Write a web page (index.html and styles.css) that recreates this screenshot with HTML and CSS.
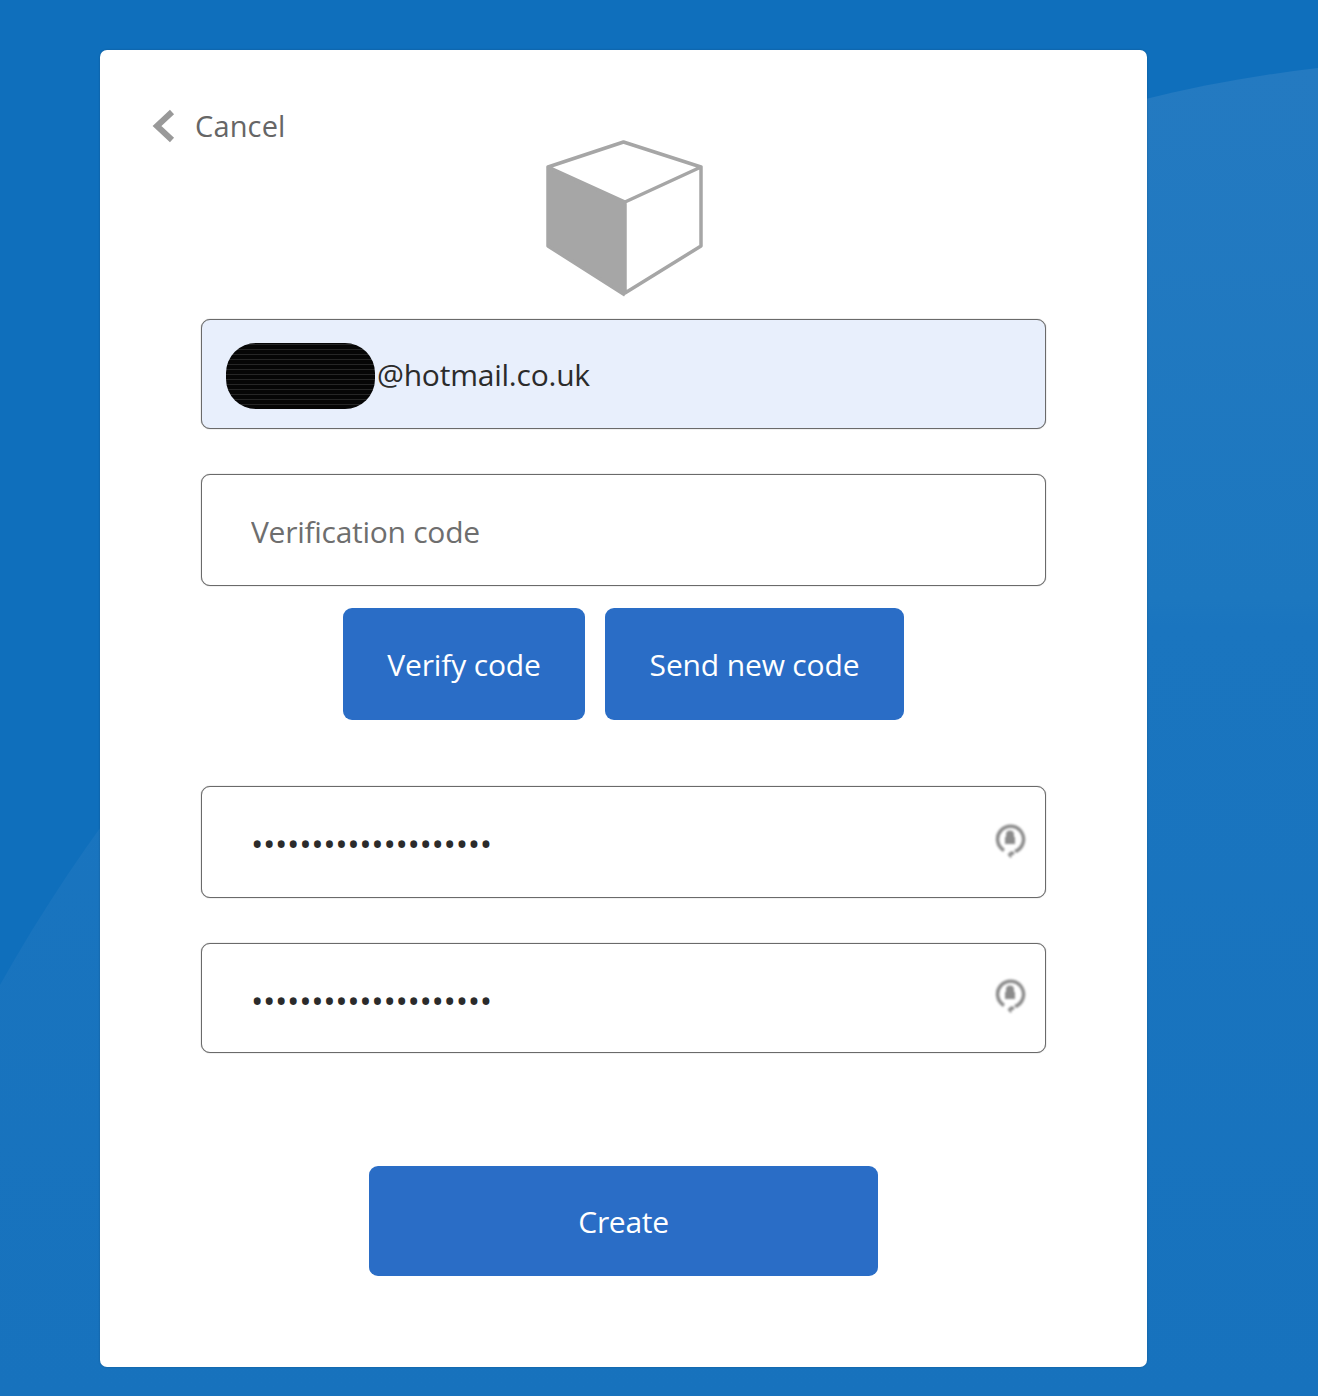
FILE: index.html
```html
<!DOCTYPE html>
<html lang="en">
<head>
<meta charset="utf-8">
<title>Create account</title>
<link rel="stylesheet" href="styles.css">
</head>
<body>
<svg class="backdrop" viewBox="0 0 1318 1396" preserveAspectRatio="none" aria-hidden="true">
  <defs>
    <linearGradient id="swoosh-fill" x1="0" y1="0" x2="0" y2="1">
      <stop offset="0" stop-color="#247ac1"/>
      <stop offset="0.4" stop-color="#1c77bf"/>
      <stop offset="0.42" stop-color="#1a75bf"/>
      <stop offset="1" stop-color="#1772bd"/>
    </linearGradient>
  </defs>
  <path fill="url(#swoosh-fill)" d="M0 985C120 770 330 520 620 330C800 215 1040 100 1318 68V1396H0Z"/>
</svg>
<main class="card">
  <a class="cancel" href="#">
    <svg class="chevron" viewBox="0 0 24 34" aria-hidden="true"><path d="M20 3L5 17l15 14"/></svg>
    <span>Cancel</span>
  </a>
  <div class="logo">
    <svg viewBox="0 0 160 157" aria-hidden="true">
      <path class="cube-dark" d="M4 27L81 62V155L4 106Z"/>
      <path class="cube-line" d="M4 27L79.500 2L157 27L81 62ZM157 27V106L81 153V62M4 27V106L81 155"/>
    </svg>
  </div>
  <div class="field field-email">
    <span class="redaction"></span><span class="email">@hotmail.co.uk</span>
  </div>
  <input class="field field-code" type="text" placeholder="Verification code">
  <div class="actions">
    <button class="btn btn-verify" type="button">Verify code</button>
    <button class="btn btn-send" type="button">Send new code</button>
  </div>
  <div class="pw pw-first">
    <input class="field" type="password" value="aaaaaaaaaaaaaaaaaaaa">
    <svg class="pw-icon" viewBox="0 0 32 38" aria-hidden="true">
      <path class="ring" d="M10 29.500A13 13 0 1 1 21 30.500"/>
      <path class="arrow" d="M20 27.500v3h-3.500l-3 3 3 3.500 1.500-1.500-1-1.500h3v-6.500z"/>
      <path class="lock" d="M12 16v-2.500a4 4 0 0 1 8 0V16h1v7H11v-7z"/>
    </svg>
  </div>
  <div class="pw pw-second">
    <input class="field" type="password" value="aaaaaaaaaaaaaaaaaaaa">
    <svg class="pw-icon" viewBox="0 0 32 38" aria-hidden="true">
      <path class="ring" d="M10 29.500A13 13 0 1 1 21 30.500"/>
      <path class="arrow" d="M20 27.500v3h-3.500l-3 3 3 3.500 1.500-1.500-1-1.500h3v-6.500z"/>
      <path class="lock" d="M12 16v-2.500a4 4 0 0 1 8 0V16h1v7H11v-7z"/>
    </svg>
  </div>
  <button class="btn btn-create" type="button">Create</button>
</main>
</body>
</html>
```

FILE: styles.css
```css
* { box-sizing: border-box; }
html, body { margin: 0; height: 1396px; overflow: hidden; }
body {
  background: #0f6fbc;
  padding: 50px 171px 0 100px;
  font-family: "Open Sans", "Noto Sans", "Liberation Sans", sans-serif;
  position: relative;
}
.backdrop { position: absolute; inset: 0; width: 100%; height: 100%; }
.card {
  position: relative;
  width: 1047px;
  height: 1317px;
  background: #fff;
  border-radius: 7px;
  padding: 59px 101px 0;
  display: flex;
  flex-direction: column;
  align-items: center;
  box-shadow: 0 0 2px rgba(0, 0, 0, .25);
}
.cancel {
  align-self: flex-start;
  margin-left: -49px;
  height: 34px;
  display: flex;
  align-items: center;
  gap: 19px;
  color: #666;
  font-size: 29px;
  line-height: 34px;
  text-decoration: none;
  letter-spacing: .15px;
  white-space: nowrap;
}
.chevron { width: 24px; height: 34px; flex: none; }
.chevron path { fill: none; stroke: #999; stroke-width: 6; }
.logo { height: 157px; width: 160px; margin-top: -3px; }
.logo svg { display: block; width: 160px; height: 157px; }
.cube-dark { fill: #a6a6a6; }
.cube-line { fill: none; stroke: #a6a6a6; stroke-width: 3.500; stroke-linejoin: round; }
.field {
  display: block;
  width: 845px;
  height: 111px;
  border: 1px solid #6a6a6a;
  border-radius: 9px;
  background: #fff;
  box-shadow: 0 0 1px rgba(0, 0, 0, .55);
  font: inherit;
  font-size: 30px;
  letter-spacing: -.15px;
  color: #2b2b2b;
  outline: none;
}
.field-email {
  margin-top: 22px;
  height: 110px;
  background: #e8effc;
  display: flex;
  align-items: center;
  padding: 0 0 0 24px;
  gap: 2px;
}
.redaction {
  width: 149px;
  height: 66px;
  flex: none;
  border-radius: 30px;
  margin-top: 4px;
  background: repeating-linear-gradient(0deg, #060606 0 4px, #262626 4px 5px);
}
.email { margin-top: 1px; letter-spacing: -.22px; }
.field-code {
  margin-top: 45px;
  height: 112px;
  padding: 3px 49px 0;
  letter-spacing: -.27px;
}
.field-code::placeholder { color: #6e6e6e; opacity: 1; }
.actions { display: flex; gap: 20px; margin-top: 22px; }
.btn {
  border: 0;
  border-radius: 9px;
  background: #2a6dc6;
  color: #fff;
  font: inherit;
  font-size: 30px;
  letter-spacing: -.15px;
  padding: 0;
}
.btn-verify { width: 242px; height: 112px; }
.btn-send { width: 299px; height: 112px; }
.pw { position: relative; width: 845px; }
.pw-first { margin-top: 66px; }
.pw-first .field { height: 112px; }
.pw-second { margin-top: 45px; }
.pw-second .field { height: 110px; }
.pw .field { padding: 3px 49px 0; font-size: 33px; letter-spacing: -.37px; }
.pw-second .field { padding-top: 5px; }
.pw-icon { position: absolute; right: 20px; top: 35px; width: 32px; height: 38px; filter: blur(.8px); }
.pw-second .pw-icon { top: 33px; }
.ring { fill: none; stroke: #8c8c8c; stroke-width: 3.500; }
.arrow { fill: #8c8c8c; }
.lock { fill: #8c8c8c; }
.btn-create { width: 509px; height: 110px; margin-top: 113px; letter-spacing: -.3px; }
```
